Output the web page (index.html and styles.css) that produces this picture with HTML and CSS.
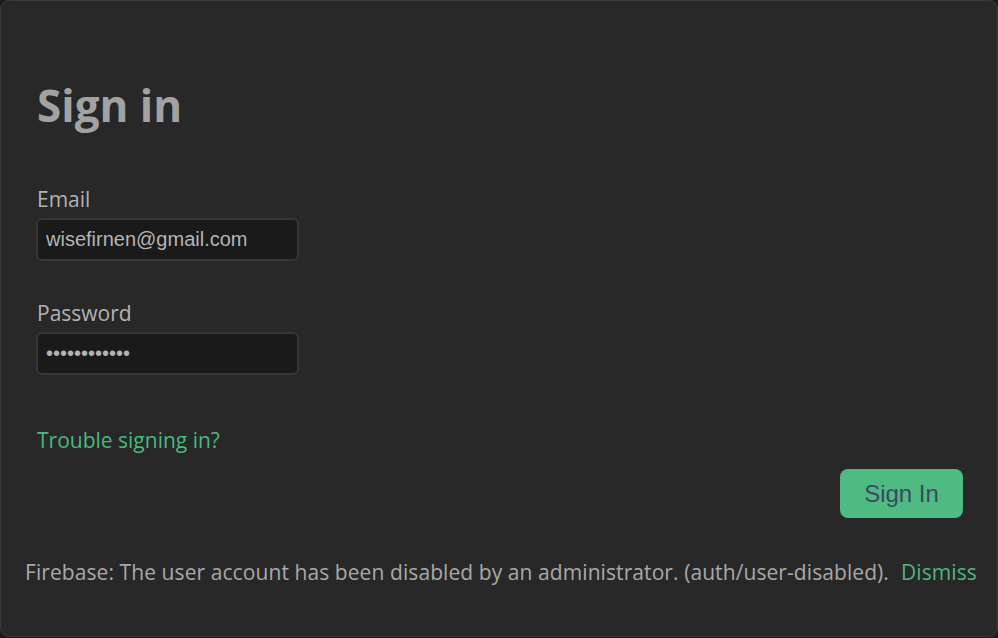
FILE: index.html
```html
<!DOCTYPE html>
<html>
<head>
<meta charset="utf-8">
<link rel="stylesheet" href="styles.css">
</head>
<body>
<div class="window">
  <h1 class="title">Sign in</h1>
  <form class="form">
    <label class="field">
      <span class="label">Email</span>
      <input class="input" type="text" value="wisefirnen@gmail.com">
    </label>
    <label class="field">
      <span class="label">Password</span>
      <input class="input" type="password" value="passwordpass">
    </label>
    <a class="link trouble" href="#">Trouble signing in?</a>
    <div class="actions">
      <button class="btn" type="button">Sign In</button>
    </div>
  </form>
  <div class="error">
    <span class="msg">Firebase: The user account has been disabled by an administrator. (auth/user-disabled).</span>
    <a class="link dismiss" href="#">Dismiss</a>
  </div>
</div>
</body>
</html>
```
FILE: styles.css
```css
html, body {
  margin: 0;
  padding: 0;
  background: #1c1c1c;
}
body {
  width: 998px;
  height: 638px;
  overflow: hidden;
  font-family: "Open Sans", "Noto Sans", sans-serif;
}
.window {
  box-sizing: border-box;
  width: 998px;
  height: 637px;
  background: #282828;
  border: 1px solid #3a3a3a;
  border-radius: 9px;
  padding: 74px 23px 0 36px;
  display: flex;
  flex-direction: column;
}
.title {
  margin: 0;
  font-size: 44px;
  font-weight: 700;
  line-height: 60px;
  color: #a2a2a2;
}
.form {
  display: flex;
  flex-direction: column;
  margin-top: 50px;
}
.field {
  display: flex;
  flex-direction: column;
  align-items: flex-start;
  margin-bottom: 38px;
}
.label {
  font-size: 21px;
  line-height: 28px;
  color: #b2b2b2;
  margin-bottom: 5px;
}
.input {
  box-sizing: border-box;
  width: 263px;
  height: 43px;
  background: #1a1a1a;
  border: 2px solid #363636;
  border-radius: 6px;
  padding: 0 8px;
  margin-left: -1px;
  font-family: "Liberation Sans", Arial, sans-serif;
  font-size: 20px;
  color: #b4b4b4;
  outline: none;
}
.link {
  color: #4bb77d;
  text-decoration: none;
}
.trouble {
  align-self: flex-start;
  font-size: 21px;
  line-height: 28px;
  margin-top: 13px;
}
.actions {
  display: flex;
  justify-content: flex-end;
  margin-top: 15px;
  margin-right: 11px;
}
.btn {
  width: 123px;
  height: 49px;
  background: #4fba82;
  border: none;
  border-radius: 8px;
  color: #3a4a62;
  font-family: "Liberation Sans", Arial, sans-serif;
  font-size: 24px;
  padding: 0;
}
.error {
  display: flex;
  gap: 12px;
  margin-top: 40px;
  margin-left: -12px;
  font-size: 21px;
  line-height: 28px;
  letter-spacing: 0.08px;
  color: #a8a8a8;
  white-space: nowrap;
}
```
